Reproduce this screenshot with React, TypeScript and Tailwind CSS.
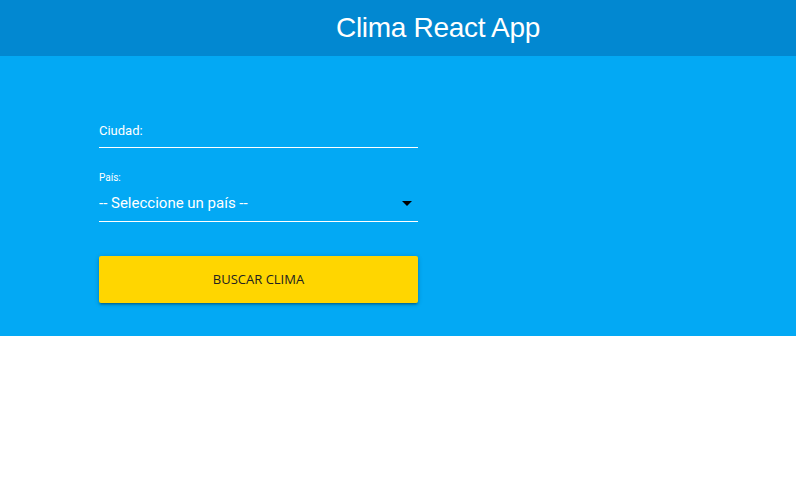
import { useState } from 'react';

export default function App() {
  const [ciudad, setCiudad] = useState('');
  const [pais, setPais] = useState('');

  return (
    <div className="min-h-[500px] bg-white">
      {/* Header */}
      <nav className="h-14 bg-[#0288d1] flex items-center justify-center pl-[80px]">
        <h1 className="text-white text-[28px] leading-none font-['Liberation_Sans',Arial,sans-serif] tracking-[-0.3px]">
          Clima React App
        </h1>
      </nav>

      {/* Form */}
      <div className="h-[280px] bg-[#03a9f4] pt-[62px] pl-[99px]">
        <form className="w-[319px] font-['Roboto',sans-serif]" onSubmit={e => e.preventDefault()}>
          <div className="border-b border-white pb-[5px]">
            <input
              value={ciudad}
              onChange={e => setCiudad(e.target.value)}
              placeholder="Ciudad:"
              className="w-full bg-transparent text-white text-[13px] leading-[18px] placeholder-white outline-none"
            />
          </div>

          <div className="mt-[24px]">
            <label className="block text-white text-[10px] leading-[12px]">País:</label>
            <div className="relative border-b border-white mt-[6px] h-[32px] flex items-center">
              <select
                value={pais}
                onChange={e => setPais(e.target.value)}
                className="appearance-none w-full bg-transparent text-white text-[15px] outline-none pb-[4px]"
              >
                <option value="" className="text-black">-- Seleccione un país --</option>
                <option value="US" className="text-black">Estados Unidos</option>
                <option value="MX" className="text-black">México</option>
                <option value="AR" className="text-black">Argentina</option>
                <option value="CO" className="text-black">Colombia</option>
                <option value="CR" className="text-black">Costa Rica</option>
                <option value="ES" className="text-black">España</option>
                <option value="PE" className="text-black">Perú</option>
              </select>
              <svg className="absolute right-[6px] top-[11px] pointer-events-none" width="10" height="5" viewBox="0 0 10 5">
                <path d="M0 0 L10 0 L5 5 Z" fill="#000" />
              </svg>
            </div>
          </div>

          <button
            type="submit"
            className="mt-[34px] w-full h-[47px] bg-[#ffd600] rounded-[2px] shadow-[0_2px_2px_rgba(0,0,0,0.14),0_3px_1px_-2px_rgba(0,0,0,0.12),0_1px_5px_rgba(0,0,0,0.2)] text-[#222] text-[13px] font-['Open_Sans',sans-serif]"
          >
            BUSCAR CLIMA
          </button>
        </form>
      </div>
    </div>
  );
}
